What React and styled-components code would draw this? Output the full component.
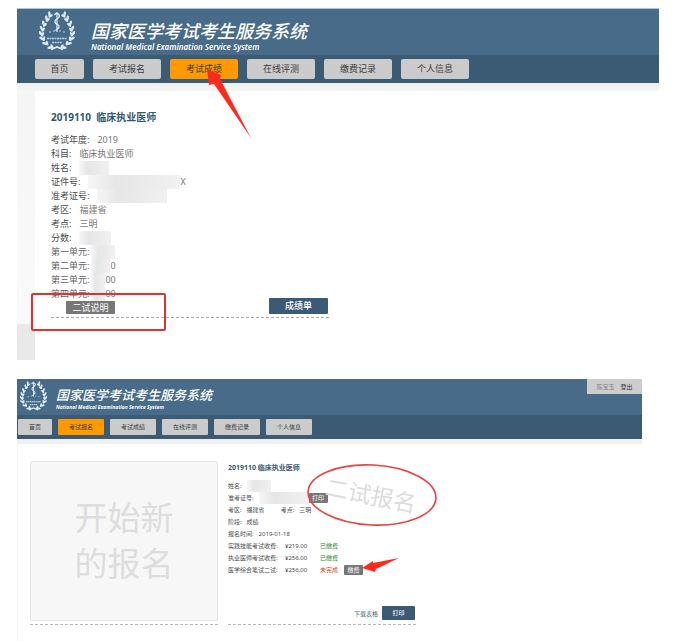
import React from "react";
import styled, { createGlobalStyle, css } from "styled-components";

const MENUS = ["首页", "考试报名", "考试成绩", "在线评测", "缴费记录", "个人信息"];

const SCORE_DETAILS = [
  { label: "考试年度:", value: "2019" },
  { label: "科目:", value: "临床执业医师" },
  { label: "姓名:", masked: 30 },
  { label: "证件号:", masked: 92, value: "X" },
  { label: "准考证号:", masked: 70 },
  { label: "考区:", value: "福建省" },
  { label: "考点:", value: "三明" },
  { label: "分数:", masked: 32 },
];

const UNITS = [
  { label: "第一单元:", masked: 24 },
  { label: "第二单元:", masked: 19, value: "0" },
  { label: "第三单元:", masked: 14, value: "00" },
  { label: "第四单元:", masked: 14, value: "00" },
];

const FEES = [
  { label: "实践技能考试收费:", amount: "¥219.00", status: "已缴费", paid: true },
  { label: "执业医师考试收费:", amount: "¥256.00", status: "已缴费", paid: true },
  { label: "医学综合笔试二试:", amount: "¥256.00", status: "未完成", paid: false },
];

// [x, y, rotation] of every leaf on the left branch
const LEAVES = [
  [11, 3, 25],
  [8, 7, 20],
  [5, 12, 15],
  [3, 17, 5],
  [2, 22, -10],
  [3, 27, -25],
  [6, 32, -45],
  [11, 36, -65],
];

function Emblem() {
  const branch = LEAVES.map(([x, y, angle]) => (
    <g key={y} transform={`translate(${x} ${y}) rotate(${angle})`}>
      <ellipse cx="-0.6" cy="0" rx="1.3" ry="2.8" transform="rotate(-32)" />
      <ellipse cx="2" cy="0.6" rx="1.2" ry="2.5" transform="rotate(32)" />
    </g>
  ));

  return (
    <EmblemSvg viewBox="0 0 36 40" fill="#dcebf5" aria-hidden="true">
      {branch}
      <g transform="translate(36 0) scale(-1 1)">{branch}</g>
      <path d="M12 38.5 L18 36 L24 38.5" fill="none" stroke="#dcebf5" strokeWidth="1.8" />
      <path d="M18 1 V21" stroke="#dcebf5" strokeWidth="1.2" />
      <path
        d="M15.5 4 C17 1 21.5 3 20 6 C19 8 15.5 8 16 11 C16.5 13.5 20.5 13.5 20 16 C19.5 18 16.5 18 17 20"
        fill="none"
        stroke="#dcebf5"
        strokeWidth="1.4"
      />
      <path d="M10 21 h2 M14 20 h2 M20 20 h2 M24 21 h2" stroke="#b9d0e0" strokeWidth="1" />
      <path d="M8 27.5 H28" stroke="#b9d0e0" strokeWidth="1.6" strokeDasharray="2 0.5" />
      <path d="M13 31.5 H23" stroke="#b9d0e0" strokeWidth="1.4" strokeDasharray="2 0.6" />
    </EmblemSvg>
  );
}

function SiteHeader({ activeMenu, compact, children }) {
  return (
    <header>
      <Banner $compact={compact}>
        <Emblem />
        <BrandText>
          <BrandName $compact={compact}>国家医学考试考生服务系统</BrandName>
          <BrandSubname $compact={compact}>National Medical Examination Service System</BrandSubname>
        </BrandText>
        {children}
      </Banner>
      <NavBar $compact={compact}>
        {MENUS.map((menu) => (
          <NavButton
            key={menu}
            type="button"
            $compact={compact}
            $short={menu.length < 3}
            $active={menu === activeMenu}
          >
            {menu}
          </NavButton>
        ))}
      </NavBar>
    </header>
  );
}

function DetailRow({ label, masked, value, muted }) {
  return (
    <Row>
      <dt>{label}</dt>
      <Value $muted={muted}>
        {masked && <Mask $width={masked} />}
        {value}
      </Value>
    </Row>
  );
}

function ScorePage() {
  return (
    <Panel>
      <SiteHeader activeMenu="考试成绩" />
      <ScoreBody>
        <SideStrip />
        <ScoreSheet>
          <ScoreRecord>
            <RecordTitle>2019110&nbsp; 临床执业医师</RecordTitle>
            <DetailList>
              {SCORE_DETAILS.map((item) => (
                <DetailRow key={item.label} {...item} muted />
              ))}
            </DetailList>
            <UnitList>
              {UNITS.map((item) => (
                <DetailRow key={item.label} {...item} muted />
              ))}
            </UnitList>
            <ScoreActions>
              <GrayButton type="button">二试说明</GrayButton>
              <BlueButton type="button">成绩单</BlueButton>
            </ScoreActions>
          </ScoreRecord>
        </ScoreSheet>
      </ScoreBody>
      <ScoreMarks viewBox="0 0 260 340" fill="none" aria-hidden="true">
        <path d="M190 61 L204 67 L203 71 L234 130 L197 76 L192 77 Z" fill="#ff2a1c" />
        <rect x="15" y="286" width="133" height="36" rx="1" stroke="#e0322e" strokeWidth="2" />
      </ScoreMarks>
    </Panel>
  );
}

function RegistrationPage() {
  return (
    <Panel $compact>
      <SiteHeader activeMenu="考试报名" compact>
        <UserBox>
          <span>陈宝玉</span>
          <LogoutLink href="#logout">登出</LogoutLink>
        </UserBox>
      </SiteHeader>
      <RegistrationBody>
        <DashedColumn>
          <StartButton type="button">
            开始新
            <br />
            的报名
          </StartButton>
        </DashedColumn>
        <DashedColumn>
          <RecordTitle $compact>2019110 临床执业医师</RecordTitle>
          <DetailList $compact>
            <DetailRow label="姓名:" masked={24} />
            <Row>
              <dt>准考证号:</dt>
              <Value>
                <Mask $width={50} />
                <GrayButton type="button" $compact>
                  打印
                </GrayButton>
              </Value>
            </Row>
            <RegionRow>
              <DetailRow label="考区:" value="福建省" />
              <DetailRow label="考点:" value="三明" />
            </RegionRow>
            <DetailRow label="阶段:" value="成绩" />
            <DetailRow label="报名时间:" value="2019-01-18" />
            {FEES.map((fee) => (
              <FeeRow key={fee.label}>
                <dt>{fee.label}</dt>
                <dd>{fee.amount}</dd>
                <FeeStatus $paid={fee.paid}>{fee.status}</FeeStatus>
                {!fee.paid && (
                  <dd>
                    <GrayButton type="button" $compact>
                      缴费
                    </GrayButton>
                  </dd>
                )}
              </FeeRow>
            ))}
          </DetailList>
          <RegistrationActions>
            <DownloadLink href="#download">下载表格</DownloadLink>
            <BlueButton type="button" $compact>
              打印
            </BlueButton>
          </RegistrationActions>
        </DashedColumn>
      </RegistrationBody>
      <Stamp>二试报名</Stamp>
      <RegistrationMarks viewBox="0 0 430 200" fill="none" aria-hidden="true">
        <ellipse
          cx="355"
          cy="116"
          rx="64"
          ry="30"
          stroke="#e94440"
          strokeWidth="1.6"
          transform="rotate(3 355 116)"
        />
        <path d="M345 189 L356 182 L356 184 L382 179 L359 190 L358 193 Z" fill="#ff2a1c" />
      </RegistrationMarks>
    </Panel>
  );
}

export default function App() {
  return (
    <React.Fragment>
      <GlobalStyle />
      <Page>
        <ScorePage />
        <RegistrationPage />
      </Page>
    </React.Fragment>
  );
}

const GlobalStyle = createGlobalStyle`
  * {
    box-sizing: border-box;
  }

  body {
    margin: 0;
    background-color: #ffffff;
    color: #4c4c4c;
    font-family: "Noto Sans", "Noto Sans CJK SC", sans-serif;
  }

  button {
    padding: 0;
    border: none;
    font-family: inherit;
    cursor: pointer;
  }

  h1, h2, p, dl, dd {
    margin: 0;
  }
`;

const Page = styled.main`
  display: flex;
  flex-direction: column;
  gap: 19px;
  padding: 8px 18px 0 17px;
`;

const Panel = styled.section`
  position: relative;
  margin-right: ${({ $compact }) => ($compact ? "17px" : "0")};
`;

const Banner = styled.div`
  display: flex;
  align-items: flex-start;
  gap: ${({ $compact }) => ($compact ? "9px" : "16px")};
  height: ${({ $compact }) => ($compact ? "36px" : "47px")};
  padding: ${({ $compact }) => ($compact ? "2px 0 0 3px" : "2px 0 0 22px")};
  border-top: ${({ $compact }) => ($compact ? "none" : "1px solid #a9c6dc")};
  background-color: #476b88;

  svg {
    width: ${({ $compact }) => ($compact ? "27px" : "36px")};
  }
`;

const EmblemSvg = styled.svg`
  flex-shrink: 0;
`;

const BrandText = styled.div`
  display: flex;
  flex-direction: column;
  color: #ffffff;
  font-style: italic;
  white-space: nowrap;
`;

const BrandName = styled.h1`
  padding-top: ${({ $compact }) => ($compact ? "6px" : "9px")};
  font-size: ${({ $compact }) => ($compact ? "13px" : "18px")};
  line-height: ${({ $compact }) => ($compact ? "17px" : "22px")};
  font-weight: 500;
`;

const BrandSubname = styled.p`
  font-size: ${({ $compact }) => ($compact ? "5px" : "8px")};
  line-height: ${({ $compact }) => ($compact ? "6px" : "9px")};
  font-weight: ${({ $compact }) => ($compact ? "700" : "600")};
`;

const UserBox = styled.div`
  display: flex;
  align-items: center;
  justify-content: center;
  gap: 6px;
  width: 55px;
  height: 15px;
  margin: -2px 0 0 auto;
  background-color: #cdcdcd;
  color: #858585;
  font-size: 6px;
`;

const LogoutLink = styled.a`
  color: #333333;
  text-decoration: none;
`;

const NavBar = styled.nav`
  display: flex;
  align-items: center;
  gap: ${({ $compact }) => ($compact ? "6px" : "9px")};
  height: ${({ $compact }) => ($compact ? "24px" : "28px")};
  padding-left: ${({ $compact }) => ($compact ? "1px" : "18px")};
  background-color: #3b5a73;
`;

const NavButton = styled.button`
  width: ${({ $short }) => ($short ? "49px" : "68px")};
  height: 20px;
  border-radius: 2px;
  background-color: ${({ $active }) => ($active ? "#ff9900" : "#cbcbcb")};
  color: #3c3c3c;
  font-size: 9px;
  line-height: 20px;

  ${({ $compact, $short }) =>
    $compact &&
    css`
      width: ${$short ? "34px" : "46px"};
      height: 16px;
      border-radius: 1px;
      font-size: 6px;
      line-height: 16px;
    `}
`;

const ScoreBody = styled.div`
  display: flex;
  padding-top: 8px;
  background: linear-gradient(#eeeeee, #f5f5f5) top / 100% 8px no-repeat;
`;

const SideStrip = styled.div`
  display: flex;
  flex-direction: column;
  justify-content: flex-end;
  width: 18px;
  background: linear-gradient(#f5f5f5, #fbfbfb);

  &::after {
    content: "";
    height: 36px;
    background-color: #e9e9e9;
  }
`;

const ScoreSheet = styled.div`
  flex: 1;
  padding: 18px 16px 42px;
  border-top-left-radius: 3px;
  background-color: #ffffff;
`;

const ScoreRecord = styled.article`
  width: 278px;
  border-bottom: 1px dashed #a8a8a8;
`;

const RecordTitle = styled.h2`
  margin-bottom: ${({ $compact }) => ($compact ? "6px" : "8px")};
  color: ${({ $compact }) => ($compact ? "#3b5a73" : "#2f5873")};
  font-size: ${({ $compact }) => ($compact ? "7px" : "10px")};
  line-height: ${({ $compact }) => ($compact ? "12px" : "16px")};
  font-weight: 700;
`;

const DetailList = styled.dl`
  --row-gap: ${({ $compact }) => ($compact ? "5px" : "8px")};
  --row-height: ${({ $compact }) => ($compact ? "12px" : "14px")};
  font-size: ${({ $compact }) => ($compact ? "6px" : "9px")};
`;

const UnitList = styled(DetailList)`
  --row-gap: 2px;
  color: #626262;
`;

const Row = styled.div`
  display: flex;
  align-items: center;
  gap: var(--row-gap);
  height: var(--row-height);
  line-height: var(--row-height);
  white-space: nowrap;
`;

const Value = styled.dd`
  display: flex;
  align-items: center;
  color: ${({ $muted }) => ($muted ? "#787878" : "inherit")};
`;

const Mask = styled.span`
  width: ${({ $width }) => $width}px;
  height: var(--row-height);
  background: linear-gradient(90deg, #f6f6f6, #e6e6e6 30%, #eaeaea 60%, #f1f1f1);
`;

const RegionRow = styled.div`
  display: flex;
  gap: 16px;
`;

const FeeRow = styled(Row)`
  display: grid;
  grid-template-columns: 52px 30px 19px auto;
  justify-content: start;
`;

const FeeStatus = styled.dd`
  color: ${({ $paid }) => ($paid ? "#2c8a2c" : "#d0452b")};
`;

const GrayButton = styled.button`
  width: ${({ $compact }) => ($compact ? "19px" : "49px")};
  height: ${({ $compact }) => ($compact ? "10px" : "13px")};
  border-radius: 1px;
  background-color: #777777;
  color: #ffffff;
  font-size: ${({ $compact }) => ($compact ? "6px" : "9px")};
  line-height: ${({ $compact }) => ($compact ? "10px" : "13px")};
`;

const BlueButton = styled.button`
  width: ${({ $compact }) => ($compact ? "33px" : "59px")};
  height: ${({ $compact }) => ($compact ? "14px" : "16px")};
  border-radius: 1px;
  background-color: #3a5a75;
  color: #ffffff;
  font-size: ${({ $compact }) => ($compact ? "6px" : "9px")};
  line-height: ${({ $compact }) => ($compact ? "14px" : "16px")};
  font-weight: 500;
`;

const ScoreActions = styled.div`
  display: flex;
  align-items: flex-end;
  justify-content: space-between;
  height: 13px;
  margin-bottom: 3px;
  padding: 0 1px 0 15px;
`;

const RegistrationBody = styled.div`
  display: flex;
  gap: 10px;
  padding: 18px 12px 16px;
  border-top: 5px solid #f0f0f2;
  border-left: 1px solid #f4f4f4;
`;

const DashedColumn = styled.article`
  display: flex;
  flex-direction: column;
  width: 188px;
  height: 163px;
  border-bottom: 1px dashed #b5b5b5;
`;

const StartButton = styled.button`
  flex: 1;
  margin: -1px 0 3px;
  border: 1px solid #e6e6e6;
  border-radius: 2px;
  background-color: #f7f7f7;
  color: #dddddd;
  font-size: 33px;
  line-height: 46px;
  font-weight: 400;
`;

const RegistrationActions = styled.div`
  display: flex;
  align-items: center;
  justify-content: flex-end;
  gap: 4px;
  margin: auto 1px 4px 0;
`;

const DownloadLink = styled.a`
  color: #3b5a73;
  font-size: 6px;
  text-decoration: none;
`;

// annotations drawn over the pages
const Stamp = styled.div`
  position: absolute;
  top: 99px;
  left: 308px;
  color: #dcdcdc;
  font-size: 23px;
  line-height: 34px;
  font-weight: 400;
  transform: rotate(11deg);
  pointer-events: none;
`;

const Marks = styled.svg`
  position: absolute;
  top: 0;
  left: 0;
  pointer-events: none;
`;

const ScoreMarks = styled(Marks)`
  width: 260px;
  height: 340px;
`;

const RegistrationMarks = styled(Marks)`
  width: 430px;
  height: 200px;
`;
